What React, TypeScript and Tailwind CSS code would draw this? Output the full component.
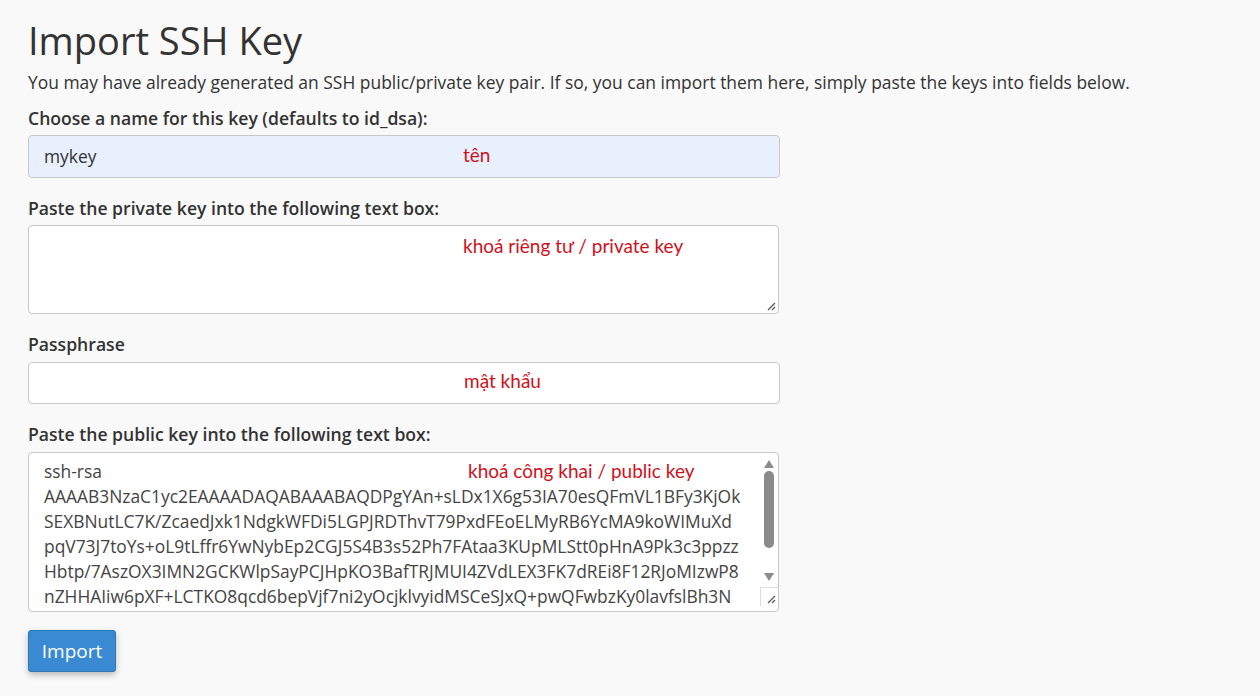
import React from "react";

const font = { fontFamily: '"Open Sans", "Noto Sans", sans-serif' };
const red = "text-[19px] text-[#d0101b] leading-none whitespace-nowrap [font-family:Lato,'Noto_Sans',sans-serif]";

const Resizer = () => (
  <svg width="10" height="10" viewBox="0 0 10 10">
    <path d="M9 2 L2 9 M9 6 L6 9" stroke="#555" strokeWidth="1.2" />
  </svg>
);

const keyLines = [
  "AAAAB3NzaC1yc2EAAAADAQABAAABAQDPgYAn+sLDx1X6g53IA70esQFmVL1BFy3KjOk",
  "SEXBNutLC7K/ZcaedJxk1NdgkWFDi5LGPJRDThvT79PxdFEoELMyRB6YcMA9koWIMuXd",
  "pqV73J7toYs+oL9tLffr6YwNybEp2CGJ5S4B3s52Ph7FAtaa3KUpMLStt0pHnA9Pk3c3ppzz",
  "Hbtp/7AszOX3IMN2GCKWlpSayPCJHpKO3BafTRJMUI4ZVdLEX3FK7dREi8F12RJoMIzwP8",
  "nZHHAIiw6pXF+LCTKO8qcd6bepVjf7ni2yOcjklvyidMSCeSJxQ+pwQFwbzKy0lavfslBh3N",
];

const Label = ({ children, className = "" }: { children: React.ReactNode; className?: string }) => (
  <div className={"text-[17.6px] leading-6 font-semibold text-[#333] " + className}>{children}</div>
);

export default function App() {
  return (
    <div className="min-h-[696px] w-full bg-[#f9f9f9] text-[#333]" style={font}>
      <div className="pl-[28px] pt-[17px] w-[800px] flex flex-col items-start">
        <h1 className="text-[38px] leading-[46px] text-[#333] font-normal">Import SSH Key</h1>
        <p className="mt-[7px] text-[17.45px] leading-6 whitespace-nowrap">
          You may have already generated an SSH public/private key pair. If so, you can import them here, simply paste the keys into fields below.
        </p>

        <Label className="mt-[12px]">Choose a name for this key (defaults to id_dsa):</Label>
        <div className="mt-[5px] h-[43px] w-[752px] rounded-[4px] border border-[#c8c8c8] bg-[#e8f0fe] pl-[15px] flex items-center text-[17.4px]">
          <span className="w-[419px]">mykey</span>
          <span className={red + " -mt-[4px]"}>tên</span>
        </div>

        <Label className="mt-[18px]">Paste the private key into the following text box:</Label>
        <div className="mt-[5px] h-[89px] w-[751px] rounded-[4px] border border-[#c8c8c8] bg-white flex flex-col pl-[434px] pt-[10px] pr-[2px] pb-[2px]">
          <span className={red}>khoá riêng tư / private key</span>
          <div className="mt-auto self-end flex">
            <Resizer />
          </div>
        </div>

        <Label className="mt-[18px]">Passphrase</Label>
        <div className="mt-[6px] h-[42px] w-[752px] rounded-[4px] border border-[#c8c8c8] bg-white flex items-center pl-[435px]">
          <span className={red + " -mt-[5px]"}>mật khẩu</span>
        </div>

        <Label className="mt-[18px]">Paste the public key into the following text box:</Label>
        <div className="mt-[6px] h-[160px] w-[751px] rounded-[4px] border border-[#c8c8c8] bg-white overflow-hidden flex">
          <div className="flex-1 min-w-0 pl-[15px] pt-[6px] text-[17.4px] leading-[25px] whitespace-nowrap overflow-hidden text-[#444]">
            <div className="flex items-center">
              <span className="w-[424px]">ssh-rsa</span>
              <span className={red + " -mt-[2px]"}>khoá công khai / public key</span>
            </div>
            {keyLines.map((l, i) => (
              <div key={i}>{l}</div>
            ))}
          </div>
          <div className="w-[18px] shrink-0 flex flex-col items-center">
            <svg width="12" height="10" viewBox="0 0 12 10" className="mt-[6px]">
              <path d="M6 1 L11 9 L1 9 Z" fill="#8c8c8c" />
            </svg>
            <div className="mt-[2px] h-[77px] w-[10px] rounded-[5px] bg-[#8a8a8a]" />
            <svg width="12" height="10" viewBox="0 0 12 10" className="mt-[24px]">
              <path d="M1 1 L11 1 L6 9 Z" fill="#8c8c8c" />
            </svg>
            <div className="mt-[5px] h-[19px] w-[18px] border-t border-l border-[#dcdcdc] flex items-end justify-end p-[2px]">
              <Resizer />
            </div>
          </div>
        </div>

        <button className="mt-[18px] h-[42px] w-[88px] rounded-[3px] border border-[#2f76b8] bg-[#3a8ad3] text-white text-[19px] shadow-[0_3px_6px_rgba(0,0,0,0.25)]" style={font}>
          Import
        </button>
      </div>
    </div>
  );
}
